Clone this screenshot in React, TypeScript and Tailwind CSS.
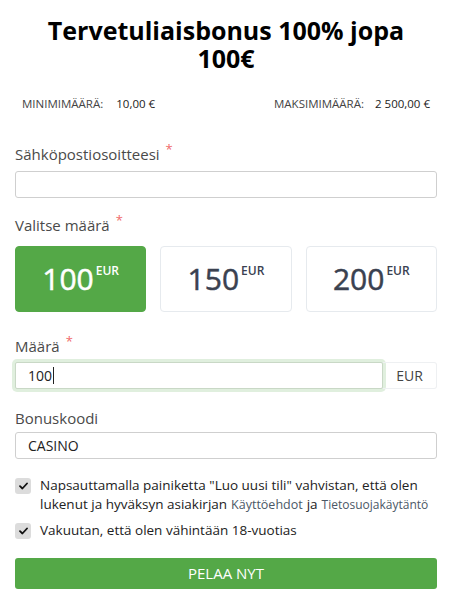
import React from "react";

function Label({ text, req }: { text: string; req?: boolean }) {
  return (
    <div className="text-[15px] leading-[20px] text-[#4a4a4a]">
      {text}
      {req && <span className="relative top-[-6px] ml-[6px] text-[13px] text-[#f06a6a]">*</span>}
    </div>
  );
}

function Check() {
  return (
    <div className="mt-[2px] flex h-[16px] w-[16px] shrink-0 items-center justify-center rounded-[3px] bg-[#dcdcdc]">
      <svg width="9" height="8" viewBox="0 0 9 8">
        <path d="M1 4.2 L3.4 6.5 L8 1.5" fill="none" stroke="#111" strokeWidth="1.8" strokeLinecap="round" strokeLinejoin="round" />
      </svg>
    </div>
  );
}

function Amount({ v, active }: { v: string; active?: boolean }) {
  return (
    <div
      className={
        "flex h-[66px] items-center justify-center rounded-[4px] border " +
        (active ? "border-[#54a847] bg-[#54a847] text-white" : "border-[#e6eaee] bg-white text-[#3a4150]")
      }
    >
      <span className="text-[30px] leading-none [-webkit-text-stroke:0.5px_currentColor]">{v}</span>
      <span className="relative top-[-8px] ml-[2px] text-[12px] font-semibold leading-none">EUR</span>
    </div>
  );
}

export default function App() {
  return (
    <div className="min-h-[601px] w-[455px] bg-white pl-[15px] pr-[18px] text-[#333]" style={{ fontFamily: '"Open Sans", "Noto Sans", sans-serif' }}>
      <h1 className="flex flex-col items-center pt-[16px] text-[25px] font-bold text-black">
        <div className="h-[28px] leading-[28px]">Tervetuliaisbonus 100% jopa</div>
        <div className="h-[28px] leading-[28px]">100€</div>
      </h1>
      <div className="mt-[24px] flex justify-between px-[7px] text-[11.5px] leading-[16px]">
        <div>
          <span className="text-[#444]">MINIMIMÄÄRÄ:</span>
          <span className="ml-[13px] text-[#222]">10,00 €</span>
        </div>
        <div>
          <span className="text-[#444]">MAKSIMIMÄÄRÄ:</span>
          <span className="ml-[11px] text-[#222]">2 500,00 €</span>
        </div>
      </div>

      <div className="mt-[32px]">
        <Label text="Sähköpostiosoitteesi" req />
      </div>
      <input className="mt-[6px] block h-[27px] w-full rounded-[3px] border border-[#cfcfcf] bg-white px-[12px] text-[14px] outline-none" />

      <div className="mt-[17px]">
        <Label text="Valitse määrä" req />
      </div>
      <div className="mt-[10px] grid grid-cols-3 gap-[14px]">
        <Amount v="100" active />
        <Amount v="150" />
        <Amount v="200" />
      </div>

      <div className="mt-[24px]">
        <Label text="Määrä" req />
      </div>
      <div className="mt-[5px] flex h-[27px]">
        <div className="flex flex-1 items-center rounded-[2px] border border-[#c9d8c6] bg-white px-[12px] text-[14px] text-[#222] shadow-[0_0_0_3px_rgba(84,168,71,0.18)]">
          100<span className="ml-[1px] inline-block h-[17px] w-px bg-[#222]" />
        </div>
        <div className="flex w-[54px] items-center justify-center rounded-r-[3px] border border-l-0 border-[#eef0f2] text-[14px] text-[#444]">
          EUR
        </div>
      </div>

      <div className="mt-[19px]">
        <Label text="Bonuskoodi" />
      </div>
      <div className="mt-[4px] flex h-[27px] items-center rounded-[3px] border border-[#cfcfcf] bg-white px-[12px] text-[14px] text-[#222]">
        CASINO
      </div>

      <div className="mt-[17px] flex gap-[9px] text-[13.5px] leading-[19px] text-[#222]">
        <Check />
        <div className="flex flex-col">
          <div>Napsauttamalla painiketta "Luo uusi tili" vahvistan, että olen</div>
          <div className="flex gap-[4px] whitespace-nowrap">
            <span>lukenut ja hyväksyn asiakirjan</span>
            <span className="text-[12.5px] text-[#4b5866]">Käyttöehdot</span>
            <span>ja</span>
            <span className="text-[12px] text-[#4b5866]">Tietosuojakäytäntö</span>
          </div>
        </div>
      </div>
      <div className="mt-[7px] flex gap-[9px] text-[13.5px] leading-[19px] text-[#222]">
        <Check />
        <div>Vakuutan, että olen vähintään 18-vuotias</div>
      </div>

      <button className="mt-[18px] flex h-[31px] w-full items-center justify-center rounded-[3px] bg-[#54a847] text-[15px] text-white">
        PELAA NYT
      </button>
    </div>
  );
}
